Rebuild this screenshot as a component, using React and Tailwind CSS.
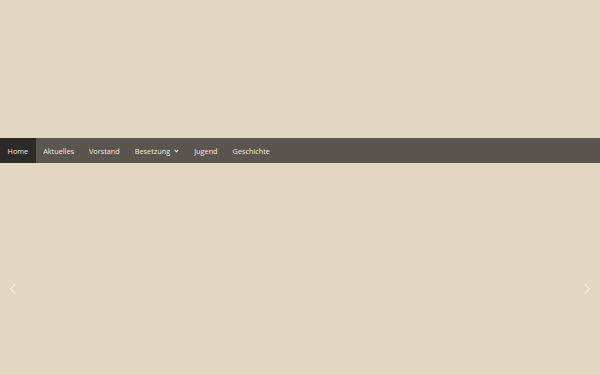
export default function App() {
  const links = ['Home', 'Aktuelles', 'Vorstand', 'Besetzung', 'Jugend', 'Geschichte']

  return (
    <div className="w-[600px] h-[375px] bg-[#e2d8c1] flex flex-col overflow-hidden" style={{ fontFamily: '"Open Sans", sans-serif' }}>
      <div className="h-[138px] shrink-0" />
      <nav className="h-[25px] bg-[#5a554d] flex items-stretch shrink-0">
        {links.map((l, i) => (
          <a
            key={l}
            href="#"
            className={`flex items-center px-[7.5px] pt-[1px] text-[7.3px] text-[#efeae0] ${i === 0 ? 'bg-[#2d2b27]' : ''}`}
          >
            {l}
            {l === 'Besetzung' && (
              <svg width="5" height="4" viewBox="0 0 5 4" className="ml-[4px]">
                <path d="M0.8 1 L2.5 2.7 L4.2 1" stroke="#efeae0" strokeWidth="1.1" fill="none" />
              </svg>
            )}
          </a>
        ))}
      </nav>
      <div className="flex-1 flex items-center justify-between px-[9px] pt-[40px]">
        <svg width="8" height="12" viewBox="0 0 8 12">
          <path d="M6.5 1 L1.5 6 L6.5 11" stroke="#f2ecdf" strokeWidth="1.3" fill="none" />
        </svg>
        <svg width="8" height="12" viewBox="0 0 8 12">
          <path d="M1.5 1 L6.5 6 L1.5 11" stroke="#f2ecdf" strokeWidth="1.3" fill="none" />
        </svg>
      </div>
    </div>
  )
}
